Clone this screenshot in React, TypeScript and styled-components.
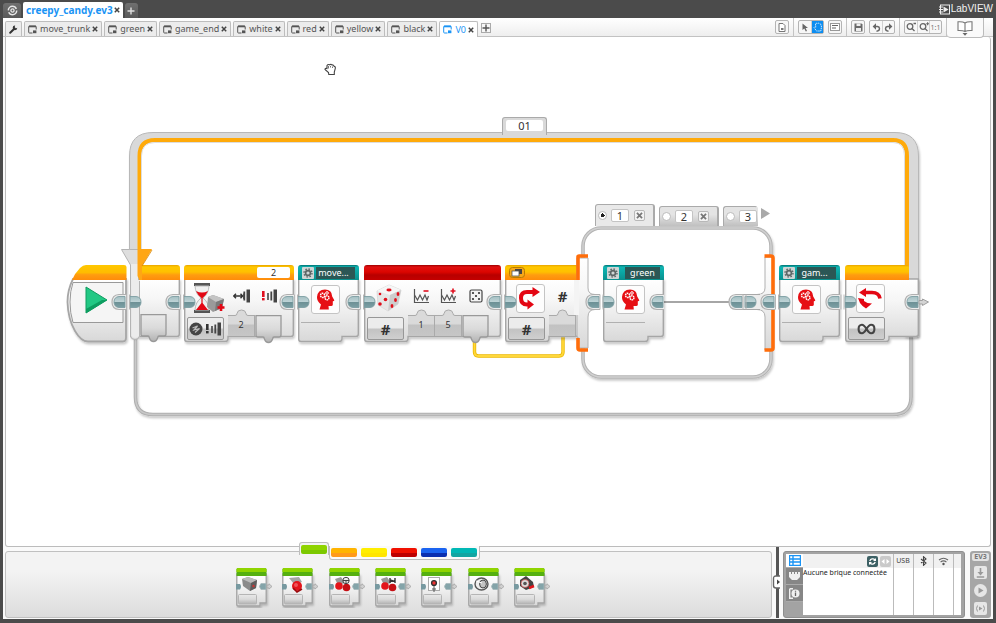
import React from "react";
import styled, { createGlobalStyle, css } from "styled-components";

const Global = createGlobalStyle`
  * { box-sizing: border-box; }
  body { margin: 0; background: #4b4b4b; }
  button, input { font: inherit; color: inherit; margin: 0; }
  svg { display: block; flex: none; }
`;

const blue = "#1a94f5";

/* ---------- shell ---------- */

const Page = styled.div`
  min-height: 100vh;
  display: flex;
  flex-direction: column;
  padding: 0 3px 4px;
  background: #4b4b4b;
  color: #555;
  font: 9px/12px "Noto Sans", "DejaVu Sans", sans-serif;
`;

const TitleBar = styled.header`
  display: flex;
  align-items: flex-end;
  height: 18px;
`;

const TitleButton = styled.button<{ $w: number }>`
  display: grid;
  place-items: center;
  width: ${(p) => p.$w}px;
  height: 15px;
  padding: 0;
  border: 0;
  border-radius: 3px 3px 0 0;
  background: linear-gradient(#707070, #595959);
`;

const ProjectTab = styled.div`
  display: flex;
  align-items: center;
  gap: 1px;
  height: 16px;
  margin: 0 2px;
  padding: 0 3px;
  border-radius: 2px 2px 0 0;
  background: #fff;
  color: ${blue};
  font-size: 10px;
  font-weight: 700;
`;

const Logo = styled.div`
  display: flex;
  align-items: center;
  gap: 1px;
  margin-left: auto;
  height: 18px;
  color: #f2f2f2;
  font: 10px/12px "Liberation Sans", Arial, sans-serif;
`;

const Frame = styled.main`
  flex: 1;
  display: flex;
  flex-direction: column;
  padding-bottom: 1px;
  background: #fafafa;
`;

const TabBar = styled.nav`
  display: flex;
  align-items: stretch;
  height: 19px;
  padding: 0 9px 0 2px;
  border-bottom: 1px solid #c2c2c2;
  background: linear-gradient(#fff, #eee);
`;

const Tab = styled.div<{ $active?: boolean }>`
  display: flex;
  align-items: center;
  gap: 2px;
  height: 15px;
  margin: 3px 2px 0 0;
  padding: 0 3px;
  border: 1px solid #bdbdbd;
  border-bottom: 0;
  border-radius: 2px 2px 0 0;
  background: #ececec;
  ${(p) =>
    p.$active &&
    css`
      height: 16px;
      background: #fff;
      color: ${blue};
      position: relative;
    `}
`;

const Plain = styled.button`
  display: flex;
  align-items: center;
  gap: 3px;
  padding: 0;
  border: 0;
  background: none;
`;

const AddTab = styled.button`
  display: grid;
  place-items: center;
  width: 10px;
  height: 10px;
  margin: 5px 0 0 1px;
  padding: 0;
  border: 1px solid #aaa;
  background: #f6f6f6;
`;

const Tools = styled.div`
  display: flex;
  margin-left: auto;
`;

const ToolGroup = styled.div`
  display: flex;
  align-items: center;
  gap: 4px;
  padding: 0 4px;
  border-right: 1px solid #c4c4c4;
`;

const ToolSet = styled.div`
  display: flex;
  height: 14px;
  border: 1px solid #b4b4b4;
  border-radius: 2px;
  background: #f7f7f7;
`;

const Tool = styled.button<{ $on?: boolean }>`
  display: grid;
  place-items: center;
  width: 12px;
  height: 12px;
  padding: 0;
  border: 0;
  background: ${(p) => (p.$on ? "#0d8df0" : "none")};
  color: ${(p) => (p.$on ? "#fff" : "#777")};
  font-size: 7px;
  line-height: 9px;
  & + & { border-left: 1px solid #d0d0d0; }
`;

const BookButton = styled.button`
  display: grid;
  place-items: center;
  width: 37px;
  height: 20px;
  padding: 0;
  border: 1px solid #bbb;
  border-width: 0 1px 1px 0;
  border-radius: 0 0 4px 4px;
  background: #fafafa;
  position: relative;
  z-index: 2;
`;

/* ---------- canvas ---------- */

const Canvas = styled.section`
  flex: 1;
  min-height: 420px;
  margin: 0 2px;
  border: 1px solid #bcbcbc;
  border-top: 0;
  border-radius: 0 3px 3px 3px;
  background: #fff;
  position: relative;
  overflow: hidden;
`;

const Layer = styled.svg`
  position: absolute;
  left: 0;
  top: 0;
  pointer-events: none;
`;

const Node = styled.div<{ $x: number; $y: number; $w?: number }>`
  position: absolute;
  left: ${(p) => p.$x}px;
  top: ${(p) => p.$y}px;
  width: ${(p) => (p.$w ? p.$w + "px" : "auto")};
`;

const headerFill = {
  orange: "linear-gradient(#e8a400, #ffc800 2px, #ffc000 7px, #ff9c10 10px, #ff8c0a)",
  red: "linear-gradient(#9c0000, #e01010 2px, #dc0500 7px, #b80000 10px, #c40000)",
  teal: "linear-gradient(#00706f, #10b5b3 2px, #0aa5a3 8px, #0b8f8d)",
};

const BlockHeader = styled.div<{ $c: keyof typeof headerFill; $end?: number }>`
  display: flex;
  align-items: center;
  justify-content: space-between;
  height: 15px;
  margin-right: ${(p) => p.$end ?? 0}px;
  padding: 0 4px;
  border-radius: 3px 3px 0 0;
  background: ${(p) => headerFill[p.$c]};
  position: relative;
`;

const BlockName = styled.span<{ $wide?: boolean }>`
  width: ${(p) => (p.$wide ? 39 : 35)}px;
  height: 12px;
  padding-right: ${(p) => (p.$wide ? 4 : 0)}px;
  background: #2b5755;
  color: #fff;
  text-align: center;
`;

const Columns = styled.div<{ $h: number }>`
  display: grid;
  grid-template-columns: 44px repeat(3, 27px);
  height: ${(p) => p.$h}px;
  position: relative;
`;

const IconCell = styled.div<{ $lead?: boolean }>`
  display: flex;
  align-items: center;
  justify-content: center;
  height: ${(p) => (p.$lead ? 36 : 32)}px;
  padding-left: ${(p) => (p.$lead ? 6 : 0)}px;
  color: #333;
  font-size: 15px;
  font-weight: 700;
`;

const IconBox = styled.div`
  display: grid;
  place-items: center;
  width: 29px;
  height: 29px;
  border: 1px solid #c4c4c4;
  border-radius: 3px;
  background: #fdfdfd;
`;

const BlockIcon = styled.div`
  padding: 5px 0 0 13px;
  position: relative;
`;

const Selector = styled.button`
  display: flex;
  align-items: center;
  justify-content: center;
  gap: 1px;
  width: 37px;
  height: 23px;
  margin: 2px 0 0 3px;
  padding: 0;
  border: 1px solid #979797;
  border-radius: 2px;
  background: linear-gradient(#ececec 45%, #c3c3c3 55%, #cfcfcf);
  color: #333;
  font-size: 15px;
  font-weight: 700;
`;

const Param = styled.button`
  height: 21px;
  padding: 0 0 2px;
  border: 0;
  border-right: 1px solid #aaa;
  background: linear-gradient(#dadada 40%, #c2c2c2 50%, #c6c6c6);
  color: #333;
  position: relative;
`;

const Bump = styled.svg`
  position: absolute;
  left: 0;
  top: -6px;
`;

const Field = styled.input<{ $w: number }>`
  width: ${(p) => p.$w}px;
  height: ${(p) => (p.$w > 20 ? 11 : 13)}px;
  padding: 0;
  border: ${(p) => (p.$w > 30 ? "0" : "1px solid #c4c4c4")};
  border-radius: 2px;
  background: #fff;
  color: #333;
  text-align: center;
  font-size: ${(p) => (p.$w === 33 ? 9 : 11)}px;
  line-height: 11px;
`;

const LoopName = styled.div`
  padding: 2px 3px 4px;
  border: 1px solid #aaa;
  border-bottom: 0;
  border-radius: 3px 3px 0 0;
  background: #d9d9d9;
  line-height: 0;
`;

const CaseTabs = styled.div`
  display: flex;
  align-items: flex-end;
  gap: 4px;
`;

const CaseTab = styled.div<{ $on?: boolean; $cut?: boolean }>`
  display: flex;
  align-items: center;
  gap: 4px;
  width: ${(p) => (p.$cut ? 35 : 60)}px;
  height: ${(p) => (p.$on ? 22 : 20)}px;
  padding-left: 2px;
  border: 1px solid #aaa;
  border-width: 1px 2px 0 1px;
  border-right-color: ${(p) => (p.$cut ? "transparent" : "#aaa")};
  border-radius: 3px 3px 0 0;
  background: ${(p) => (p.$on ? "#e9e9e9" : "linear-gradient(#e4e4e4 40%, #c0c0c0)")};
`;

const Radio = styled.input`
  appearance: none;
  flex: none;
  width: 9px;
  height: 9px;
  margin: 0;
  border: 1px solid #bbb;
  border-radius: 50%;
  background: #fff;
  &:checked { background: radial-gradient(#222 0 2px, #fff 2px); }
`;

const CloseCase = styled.button`
  display: grid;
  place-items: center;
  width: 11px;
  height: 11px;
  margin-left: 1px;
  padding: 0;
  border: 1px solid #b8b8b8;
  border-radius: 2px;
  background: #f2f2f2;
`;

/* ---------- bottom ---------- */

const Bottom = styled.div`
  display: flex;
  align-items: stretch;
  height: 67px;
  margin: 4px 2px 0;
`;

const Palette = styled.section`
  flex: 1;
  padding: 16px 0 0 9px;
  border: 1px solid #c0c0c0;
  border-radius: 3px;
  background: linear-gradient(#f3f3f3 30%, #dcdcdc);
  position: relative;
`;

const PaletteTabs = styled.div`
  display: flex;
  justify-content: center;
  position: absolute;
  left: 2px;
  right: 0;
  top: -10px;
`;

const ActiveSwatch = styled.div`
  height: 13px;
  padding: 2px 1px;
  border: 1px solid #bdbdbd;
  border-bottom: 0;
  border-radius: 3px 3px 0 0;
  background: #f3f3f3;
`;

const SwatchRow = styled.div`
  display: flex;
  gap: 4px;
  height: 14px;
  margin-top: 4px;
  padding: 2px 2px 0 1px;
  border: 1px solid #bdbdbd;
  border-width: 0 1px 1px;
  border-radius: 0 0 3px 3px;
  background: #fafafa;
`;

const Swatch = styled.button<{ $a: string; $b: string }>`
  display: block;
  width: 26px;
  height: 9px;
  padding: 0;
  border: 0;
  border-radius: 2px;
  background: linear-gradient(${(p) => p.$a} 55%, ${(p) => p.$b} 60%);
`;

const PaletteGrid = styled.div`
  display: grid;
  grid-template-columns: repeat(7, 1fr);
  justify-items: center;
  width: 324px;
  margin: 0 auto;
`;

const Divider = styled.button`
  width: 10px;
  margin: -5px 1px 0 0;
  padding: 0;
  border: 0;
  background: linear-gradient(90deg, transparent 4px, #555 4px 7px, transparent 7px);
  display: grid;
  place-items: center;
`;

const BrickPanel = styled.section`
  display: grid;
  grid-template-columns: 17px 1fr;
  width: 182px;
  padding: 2px 3px 2px 2px;
  border: 1px solid #8f8f8f;
  border-radius: 3px;
  background: #a3a3a3;
  color: #444;
`;

const SideTabs = styled.div`
  display: flex;
  flex-direction: column;
`;

const SideTab = styled.button<{ $on?: boolean }>`
  display: grid;
  place-items: center;
  height: ${(p) => (p.$on ? 14 : 17)}px;
  padding: 0;
  border: 0;
  border-bottom: 1px solid #aaa;
  background: ${(p) => (p.$on ? "#fff" : "#868686")};
`;

const BrickTable = styled.table`
  width: 100%;
  height: 61px;
  border-collapse: collapse;
  background: #fff;
  th, td { padding: 0; border-left: 1px solid #bbb; vertical-align: top; }
  th:first-child, td:first-child { border-left: 0; }
  th { height: 14px; background: #f1f1f1; font-weight: 400; font-size: 7px; vertical-align: middle; }
  th svg { margin: 0 auto; }
  td { color: #222; font-size: 7px; line-height: 10px; white-space: nowrap; }
  th:nth-child(2), th:nth-child(3), th:nth-child(4) { width: 20px; }
  th:last-child { width: 8px; }
`;

const HeadTools = styled.div`
  display: flex;
  justify-content: flex-end;
  gap: 2px;
  padding-right: 2px;
`;

const IconButton = styled.button<{ $dark?: boolean }>`
  display: grid;
  place-items: center;
  width: 11px;
  height: 11px;
  padding: 0;
  border: 0;
  border-radius: 2px;
  background: ${(p) => (p.$dark ? "#3d6165" : "#c9c9c9")};
  && svg { margin: 0; }
`;

const Ev3Panel = styled.aside`
  display: flex;
  flex-direction: column;
  align-items: center;
  gap: 5px;
  width: 21px;
  margin-left: 5px;
  padding-top: 2px;
  border-radius: 3px;
  background: #a6a6a6;
`;

const Ev3Label = styled.span`
  width: 17px;
  height: 8px;
  border-radius: 2px;
  background: #e2e2e2;
  color: #777;
  font-size: 7px;
  font-weight: 700;
  line-height: 8px;
  text-align: center;
`;

const Ev3Button = styled.button<{ $round?: boolean }>`
  display: grid;
  place-items: center;
  width: 13px;
  height: 13px;
  padding: 0;
  border: 0;
  border-radius: ${(p) => (p.$round ? "50%" : "2px")};
  background: #e6e6e6;
`;

/* ---------- icons ---------- */

const Cross = ({ s = 6, c = "#444" }: { s?: number; c?: string }) => (
  <svg width={s} height={s} viewBox="0 0 6 6"><path d="M.8 .8L5.2 5.2M5.2 .8L.8 5.2" stroke={c} strokeWidth="1.5" /></svg>
);

const Plus = ({ c }: { c: string }) => (
  <svg width="8" height="8" viewBox="0 0 8 8"><path d="M4 .5V7.5M.5 4H7.5" stroke={c} strokeWidth="1.4" /></svg>
);

const FileIcon = () => (
  <svg width="9" height="9" viewBox="0 0 9 9">
    <path d="M4.5 8H1.5Q.7 8 .7 7.2V1.8Q.7 1 1.5 1H7.3Q8.2 1 8.2 1.8V4.5" fill="none" stroke="currentColor" strokeWidth="1" />
    <path d="M1 1.5H8" stroke="currentColor" strokeWidth="1.6" />
    <rect x="5" y="5.4" width="3.4" height="2.8" fill="currentColor" />
  </svg>
);

const Gear = () => (
  <svg width="12" height="12" viewBox="0 0 12 12">
    <rect width="12" height="12" rx="1" fill="#cfd6d6" />
    <circle cx="6" cy="6" r="2.4" fill="none" stroke="#5c6666" strokeWidth="1.6" />
    <circle cx="6" cy="6" r="4" fill="none" stroke="#5c6666" strokeWidth="1.4" strokeDasharray="1.5 1.64" />
  </svg>
);

const Head = () => (
  <svg width="19" height="21" viewBox="0 0 19 21">
    <path d="M3.5 20.5L5 15.5Q.8 12.3 1 8Q1.6 1 9 .6Q15.8 .6 16.2 7.4L18.3 11.2Q18.4 12 16.8 12.2V15.8Q16.6 17 15.2 17H12.5L12.8 20.5Z" fill="#e60f14" />
    <g fill="none" stroke="#fff">
      <circle cx="6.6" cy="6.4" r="2.1" strokeWidth="1.5" strokeDasharray="1.5 .5" />
      <circle cx="11" cy="8.8" r="2" strokeWidth="1.4" strokeDasharray="1.4 .5" />
      <circle cx="11" cy="4" r="1.3" strokeWidth="1" />
    </g>
  </svg>
);

const Wave = ({ plus }: { plus?: boolean }) => (
  <svg width="17" height="16" viewBox="0 0 17 16">
    <path d="M1.500 1V14.500H16" fill="none" stroke="#555" strokeWidth="1.200" />
    <path d="M1.500 7L4.500 12L7 7L9.500 12L12 7L14 12L15.500 8" fill="none" stroke="#555" strokeWidth="1.2" />
    <path d={plus ? "M10.5 3H15.5M13 .5V5.5" : "M10.5 3H15.5"} stroke="#e01020" strokeWidth="1.6" />
  </svg>
);

const Bars = ({ bang, sq }: { bang?: boolean; sq?: boolean }) => (
  <svg width="18" height="16" viewBox="0 0 18 16">
    {bang ? (
      <g fill={sq ? "#333" : "#e01020"}><rect x="2" y="3" width="2.6" height="6" /><rect x="2" y="10" width="2.6" height="2.4" /></g>
    ) : (
      <path d="M1 8H9M3 5.8L.8 8L3 10.2M7.5 5.8L9.6 8L7.5 10.2" fill="none" stroke="#333" strokeWidth="1.4" />
    )}
    <path d={bang ? "M8 5V12" : "M11 5.5V11"} stroke="#444" strokeWidth="1.6" />
    <path d="M11.3 3.5V12.5" stroke="#444" strokeWidth="1.8" />
    <path d="M13.500 1.5H17V14.5H13.500Z" fill="#444" />
  </svg>
);

const Hourglass = () => (
  <svg width="32" height="31" viewBox="0 0 32 31">
    <rect x="1" y="0" width="16" height="3" fill="#555" /><rect x="1" y="27" width="16" height="3" fill="#555" />
    <path d="M2 3H16Q15.5 11 10 15Q15.5 19 16 27H2Q2.5 19 8 15Q2.5 11 2 3Z" fill="#f0f0f0" stroke="#bbb" />
    <path d="M3 8Q9 11 15 8Q13 12.5 9.6 15V20L15 27H3L8.4 20V15Q5 12.5 3 8Z" fill="#e30613" />
    <path d="M15 14L20 12L31 16L29 25L20 29L14 24Z" fill="#9a9a9a" />
    <path d="M15 14L20 12L31 16L23 19Z" fill="#c4c4c4" /><path d="M23 19L31 16L29 25L22 28Z" fill="#7a7a7a" />
    <path d="M28 21V28M24.500 24.5H31.500" stroke="#e30613" strokeWidth="2.600" />
  </svg>
);

const Dice = () => (
  <svg width="26" height="28" viewBox="0 0 26 28">
    <path d="M1 7L13 1L25 6L22 20L12 27L2 21Z" fill="#e6e6e6" stroke="#ddd" strokeLinejoin="round" />
    <path d="M1 7L13 1L25 6L14 11Z" fill="#f6f6f6" /><path d="M14 11L25 6L22 20L12 27Z" fill="#cdcdcd" />
    <g fill="#e0101c">
      <ellipse cx="13" cy="6" rx="2.6" ry="1.4" /><circle cx="4" cy="10" r="1.3" /><circle cx="9.5" cy="15.5" r="1.8" /><circle cx="4" cy="20" r="1.8" />
      <ellipse cx="22" cy="10" rx="1.4" ry="2" /><ellipse cx="19.5" cy="16" rx="1.4" ry="2" /><ellipse cx="16" cy="22" rx="1.4" ry="2" />
    </g>
  </svg>
);

const Five = () => (
  <svg width="14" height="14" viewBox="0 0 14 14">
    <rect x="1" y="1" width="12" height="12" rx="1.5" fill="#f4f4f4" stroke="#444" strokeWidth="1.2" />
    <g fill="#333"><circle cx="4" cy="4" r="1.1" /><circle cx="10" cy="4" r="1.1" /><circle cx="7" cy="7" r="1.1" /><circle cx="4" cy="10" r="1.1" /><circle cx="10" cy="10" r="1.1" /></g>
  </svg>
);

const SwitchArrow = () => (
  <svg width="24" height="23" viewBox="0 0 24 23">
    <path d="M16 5H9Q3 5 3 11Q3 17.5 9 17.5H11" fill="none" stroke="#e30613" strokeWidth="4" />
    <path d="M14.5 0L22 5L14.5 10ZM9.5 12.5L16 17.5L9.5 22.5Z" fill="#e30613" />
  </svg>
);

const LoopArrow = () => (
  <svg width="24" height="21" viewBox="0 0 24 21">
    <path d="M7 4.500H14Q21 4.500 22 10.5" fill="none" stroke="#e30613" strokeWidth="3.6" />
    <path d="M8 0L1 4.5L8 9ZM0 10L6 11L6 13Q9 15.5 14 15.5L8 20.5Q4 18 2 15Z" fill="#e30613" />
  </svg>
);

const Infinity8 = () => (
  <svg width="19" height="12" viewBox="0 0 19 12">
    <path d="M9.5 6C7.6 2.8 6.6 1.8 4.9 1.8C2.8 1.8 1.6 3.6 1.6 6S2.8 10.2 4.9 10.2C6.6 10.2 7.6 9.2 9.5 6C11.4 2.8 12.4 1.8 14.1 1.8C16.2 1.8 17.4 3.6 17.4 6S16.2 10.2 14.1 10.2C12.4 10.2 11.4 9.2 9.5 6Z" fill="none" stroke="#444" strokeWidth="2.1" />
  </svg>
);

/* ---------- blocks ---------- */

const Defs = () => (
  <defs>
    <linearGradient id="body" x1="0" y1="0" x2="0" y2="1"><stop offset="0" stopColor="#fff" /><stop offset=".35" stopColor="#f6f6f6" /><stop offset="1" stopColor="#d8d8d8" /></linearGradient>
    <linearGradient id="port" x1="0" y1="0" x2="0" y2="1"><stop offset="0" stopColor="#a5bfc2" /><stop offset=".48" stopColor="#bdd3d6" /><stop offset=".52" stopColor="#6d9095" /><stop offset="1" stopColor="#7ba0a5" /></linearGradient>
    <linearGradient id="plug" x1="0" y1="0" x2="0" y2="1"><stop offset="0" stopColor="#e9e9e9" /><stop offset=".5" stopColor="#dadada" /><stop offset="1" stopColor="#b2b2b2" /></linearGradient>
    <linearGradient id="head" x1="0" y1="0" x2="0" y2="1"><stop offset="0" stopColor="#ffc800" /><stop offset=".5" stopColor="#ffbc00" /><stop offset=".65" stopColor="#ff9c10" /><stop offset="1" stopColor="#ff8c0a" /></linearGradient>
    <filter id="soft" x="-10%" y="-10%" width="125%" height="130%"><feDropShadow dx="1" dy="2" stdDeviation="1" floodOpacity=".22" /></filter>
  </defs>
);

const BodyShape = ({ w, notch, y = 14 }: { w: number; notch: number; y?: number }) => (
  <Layer width={w + 6} height="84" viewBox={`0 0 ${w + 6} 84`}>
    <path
      filter="url(#soft)" fill="url(#body)" stroke="#a6a6a6" strokeWidth="1.4"
      d={notch
        ? `M.7 ${y}H${w - 0.7}V69Q${w - 0.7} 71.5 ${w - 3} 71.5H${notch + 1}V74Q${notch + 1} 76.5 ${notch - 2} 76.5H3Q.7 76.5 .7 74Z`
        : `M.7 ${y}H${w - 0.7}V69Q${w - 0.7} 71.5 ${w - 3} 71.5H.7Z`}
    />
  </Layer>
);

const ValueParam = ({ v, label }: { v: string; label: string }) => (
  <Param aria-label={label}>
    <Bump width="27" height="7" viewBox="0 0 27 7">
      <path d="M0 6.5H7Q9 6.5 9 4.5Q9.5 1 13.5 1Q17.5 1 18 4.5Q18 6.5 20 6.5H27" fill="#dadada" stroke="#aaa" />
    </Bump>
    {v}
  </Param>
);

const plugPath = "M1 .7H26V20Q26 22 24 22H19Q18 22 17.5 24Q16.500 27.500 13.500 27.500T9.500 24Q9 22 8 22H3Q1 22 1 20Z";

const OutPlug = () => (
  <svg width="27" height="29" viewBox="0 0 27 29">
    <path d={plugPath} fill="url(#plug)" stroke="#999" strokeWidth="1.3" />
  </svg>
);

const MyBlock = ({ x, name, wide }: { x: number; name: string; wide?: boolean }) => (
  <Node $x={x} $y={228} $w={61}>
    <BodyShape w={61} notch={wide ? 43 : 44} />
    <BlockHeader $c="teal"><Gear /><BlockName $wide={wide}>{name}</BlockName></BlockHeader>
    <BlockIcon>
      <IconBox><Head /></IconBox>
    </BlockIcon>
    <Layer width="50" height="62" viewBox="0 0 50 62"><path d="M3 57.500H42" stroke="#b0b0b0" /></Layer>
  </Node>
);

const leftPorts = [130, 184, 298, 364, 505, 603, 745, 779, 845];
const rightPorts = [126, 180, 294, 360, 501, 600, 664, 743, 775, 840, 919];

const Ports = () => (
  <Layer width="930" height="400" viewBox="6 37 930 400">
    {rightPorts.map((x) => (
      <g key={"r" + x}>
        <path d={`M${x} 294.500H${x - 7}Q${x - 14} 295 ${x - 14} 302T${x - 7} 309.500H${x}`} fill="#ececec" stroke="#b0b0b0" strokeWidth="1.200" />
        <path d={`M${x - 1} 296.500H${x - 7}Q${x - 12} 297 ${x - 12} 302T${x - 7} 307.500H${x - 1}Z`} fill="url(#port)" stroke="#7d9ea3" strokeWidth=".9" />
      </g>
    ))}
    {leftPorts.map((x) => (
      <path key={"l" + x} d={`M${x} 296.500H${x + 6}Q${x + 11} 297 ${x + 11} 302T${x + 6} 307.500H${x}Z`} fill="url(#port)" stroke="#7d9ea3" strokeWidth=".9" />
    ))}
    {[128, 182, 296, 362, 503, 601.5, 744.5, 777, 842.5].map((x) => (
      <path key={x} d={`M${x - 1.5} 294.500V309.500M${x + 1.5} 294.500V309.500`} stroke="#b8b8b8" />
    ))}
    <path d="M919 300.500H922.500V299L928.500 302L922.500 305.500V304H919Z" fill="#d4d4d4" stroke="#a0a0a0" />
  </Layer>
);

const Wires = () => (
  <Layer width="930" height="400" viewBox="6 37 930 400">
    <Defs />
    {/* loop frame */}
    <path d="M135.500 338V397Q135.500 414.500 153 414.500H893Q911 414.500 911 397V336" fill="none" stroke="#b0b0b0" strokeWidth="3.600" filter="url(#soft)" />
    <path d="M135.500 338V397Q135.500 414.500 153 414.500H893Q911 414.500 911 397V336" fill="none" stroke="#c8c8c8" strokeWidth="1.500" />
    <path d="M129.500 250V156Q129.500 132.500 153 132.500H895Q918.500 132.500 918.500 156V336H905V156Q905 142 893 142H155Q141 142 141 156V250Z" fill="#d9d9d9" stroke="#b8b8b8" filter="url(#soft)" />
    <path d="M141 265V156Q141 142 155 142H893Q905 142 905 156V270H845V260H141Z" fill="#fff" />
    <path d="M139.500 268V156Q139.500 140 155 140H893Q907 140 907 156V275" fill="none" stroke="#ffaa0a" strokeWidth="4" />
    <path d="M141.500 262V156Q141.500 142.500 155 142.500H893Q904.500 142.500 904.500 156V265" fill="none" stroke="#ddd" />
    {/* data wire and sequence wire */}
    <path d="M474.500 340V352Q474.500 356 478.500 356H559Q563 356 563 352V334" fill="none" stroke="#ecb800" strokeWidth="3.400" />
    <path d="M474.500 340V352Q474.500 356 478.500 356H559Q563 356 563 352V334" fill="none" stroke="#ffd83a" strokeWidth="1.800" />
    {/* switch frame */}
    <rect x="583" y="228" width="188" height="149" rx="18" fill="#fff" stroke="#b4b4b4" strokeWidth="3.600" filter="url(#soft)" />
    <rect x="583" y="228" width="188" height="149" rx="18" fill="none" stroke="#d0d0d0" strokeWidth="1.500" />
    <path d="M664 302H734" stroke="#a6a6a6" strokeWidth="2" />
  </Layer>
);

const SwitchSides = () => (
  <Layer width="930" height="400" viewBox="6 37 930 400">
    <path d="M577 258H588V288Q588 294.500 595 294.500V309.500Q588 309.500 588 317V348H578V337H577Z" fill="url(#body)" stroke="#b0b0b0" />
    <rect x="574" y="280" width="5" height="35" fill="#f4f4f4" />
    <path d="M578 280V257Q578 256 579 256H588" fill="none" stroke="#ff6d0a" strokeWidth="3.600" />
    <path d="M578 338V348Q578 350 580 350H588" fill="none" stroke="#ff6d0a" strokeWidth="3.600" />
    <path d="M773 257H765V288Q765 294.500 757 294.500V309.500Q765 309.500 765 317V350H773Z" fill="url(#body)" stroke="#b0b0b0" />
    <path d="M764.500 256H771Q773 256 773 258V348Q773 350 771 350H764.500" fill="none" stroke="#ff6d0a" strokeWidth="3.600" />
    <path d="M743 294.500H765V309.500H743Z" fill="#ececec" />
    <path d="M743 294.500H760M743 309.500H760" stroke="#a8a8a8" />
  </Layer>
);

const StartBlock = () => (
  <Node $x={60} $y={228} $w={66}>
    <svg width="66" height="82" viewBox="0 0 66 82">
      <path d="M7 14Q1.500 25 1.500 37Q2 54 9 66Q15 76.500 22 76.500H57Q60 76.500 60 73V14Z" fill="url(#body)" stroke="#a6a6a6" strokeWidth="1.800" filter="url(#soft)" />
      <path d="M6 15Q9 8 14 3Q17 0 20 0H58Q60.500 0 60.500 2V15Z" fill="url(#head)" />
      <path d="M7 17.500H57V57.500H7Q4 48 4 37Q4 26 7 17.500Z" fill="#f5f5f5" stroke="#999" />
      <path d="M20 22V48L41 35Z" fill="#22c884" stroke="#0e9b5f" />
      <path d="M20 48L41 35L36 35L20 44Z" fill="#0d9d60" />
    </svg>
  </Node>
);

const LoopStart = () => (
  <Node $x={124} $y={228} $w={50}>
    <BodyShape w={50} notch={0} />
    <BlockHeader $c="orange" />
  </Node>
);

const LoopSpine = () => (
  <Layer width="930" height="400" viewBox="6 37 930 400">
    <path d="M129.500 249.500H121.500L130.500 265V336Q131 339.500 135 339.500T139.500 336V281H138.500V249.500Z" fill="#dedede" stroke="#b4b4b4" />
    <path d="M131 264H138V280H139V336Q135 340 131.500 336Z" fill="#ececec" />
    <path d="M137.500 249H152L142 266V280H139.500L137.500 276Z" fill="#ffa614" />
    <path d="M142 266L152 250" stroke="#d98500" strokeWidth=".8" />
    <g transform="translate(140 314)">
      <path d={plugPath} fill="url(#plug)" stroke="#999" strokeWidth="1.300" />
    </g>
  </Layer>
);

const Cursor = () => (
  <Node $x={318} $y={26}>
    <svg width="13" height="13" viewBox="0 0 13 13">
      <path d="M3 2.500Q4 1 5.500 1.800Q7 .8 8 2Q9.600 1.600 10 3.200Q11.600 3.400 11.300 5.500L10.300 9V11.500H4.800L4.500 9.500L1 6.500Q1 5 3 5.500Z" fill="#fff" stroke="#444" strokeWidth="1.100" />
      <path d="M4.500 3V5.500M6.500 3V4.500M8.500 3.500V5" stroke="#555" strokeWidth=".8" />
    </svg>
  </Node>
);

/* ---------- palette ---------- */

const art: Record<string, React.ReactNode> = {
  "Moteur moyen": <g><path d="M6 11L12 9L21 12L20 20L14 23L7 18Z" fill="#8b8b8b" /><path d="M6 11L12 9L21 12L15 15Z" fill="#bcbcbc" /><path d="M15 15L21 12L20 20L14 23Z" fill="#5d5d5d" /><circle cx="17.500" cy="18" r="1.200" fill="#c33" /></g>,
  "Gros moteur": <g><path d="M7 10L17 9L20 14L12 16Z" fill="#a5a5a5" /><circle cx="15" cy="18" r="5" fill="#e3151b" /><path d="M11 20L15 24L20 21" fill="none" stroke="#9a0a0e" strokeWidth="1.500" /><circle cx="14" cy="17" r="2" fill="#f0555a" /></g>,
  "Direction": <g><path d="M6 11L12 9L16 15L9 17Z" fill="#999" /><circle cx="10" cy="18" r="3.800" fill="#e3151b" /><circle cx="17.500" cy="19.500" r="3.800" fill="#c60f14" /><circle cx="17" cy="12.500" r="3.200" fill="#eee" stroke="#444" /><path d="M14 12.500H20M17 12.500V15.500" stroke="#444" /></g>,
  "Char": <g><path d="M6 11L12 9L16 15L9 17Z" fill="#999" /><circle cx="10" cy="18" r="3.800" fill="#e3151b" /><circle cx="17.500" cy="19.500" r="3.800" fill="#c60f14" /><path d="M15 10V15M20 10V15M15 12L20 13.500" stroke="#333" strokeWidth="1.400" /></g>,
  "Affichage": <g><rect x="7.500" y="9.500" width="11" height="13" fill="#fff" stroke="#aaa" /><circle cx="13" cy="15" r="2.400" fill="#e33" stroke="#333" strokeWidth="1.400" /><path d="M13 18V24M11 21H15" stroke="#555" /></g>,
  "Son": <g><ellipse cx="13.500" cy="16" rx="6.500" ry="6" fill="#eee" stroke="#555" strokeWidth="1.400" /><ellipse cx="15" cy="16" rx="3.400" ry="4" fill="#c4c4c4" stroke="#444" /><path d="M8 13L14 15" stroke="#fff" /></g>,
  "Témoin": <g><path d="M6 12L12 8L19 14L20 19L12 22L6 18Z" fill="#444" /><circle cx="11" cy="15.500" r="4" fill="#ddd" stroke="#c33" strokeWidth=".6" /><circle cx="11" cy="15.500" r="1.800" fill="#555" /><path d="M15 20L20 18" stroke="#e3151b" strokeWidth="2.500" /></g>,
};

const PaletteBlock = ({ name }: { name: string }) => (
  <Plain aria-label={name}>
    <svg width="36" height="40" viewBox="0 0 36 40">
      <path d="M.8 6H30.200V35H24V38H2Q.8 38 .8 36.500Z" fill="url(#body)" stroke="#a2a2a2" strokeWidth="1.300" filter="url(#soft)" />
      <path d="M2 0H29Q30.500 0 30.500 1.500V8H.5V1.500Q.5 0 2 0Z" fill="#55b010" />
      <path d="M2 0H29Q30.500 0 30.500 1.500V4H.5V1.500Q.5 0 2 0Z" fill="#8fd400" />
      {art[name]}
      <rect x="2.500" y="26.500" width="18" height="9.500" rx="1" fill="url(#plug)" stroke="#b5b5b5" />
      <path d="M25 15.500H30V21.500H25Q22 18.500 25 15.500Z" fill="#84a4a9" stroke="#a5b8ba" strokeWidth=".8" />
      <path d="M0 16H4Q6 18.500 4 21.500H0Z" fill="#7799a0" />
      <path d="M31 17H33V15.800L36 18.500L33 21V20H31Z" fill="#d0d0d0" stroke="#a5a5a5" strokeWidth=".8" />
    </svg>
  </Plain>
);

const swatches = [
  ["Flux", "#ffb400", "#ff9a1a"],
  ["Capteurs", "#ffee00", "#ffe500"],
  ["Opérations", "#f01000", "#bd0000"],
  ["Avancé", "#1a63f0", "#0a2fb0"],
  ["Mes blocs", "#00b8b5", "#12a5a2"],
];

const tabs = ["move_trunk", "green", "game_end", "white", "red", "yellow", "black", "V0"];

export default function App() {
  return (
    <Page>
      <Global />
      <TitleBar>
        <TitleButton $w={18} aria-label="Accueil">
          <svg width="11" height="11" viewBox="0 0 11 11"><circle cx="5.500" cy="5.500" r="4.200" fill="none" stroke="#e8e8e8" strokeWidth="1.500" strokeDasharray="11 2" /><circle cx="5.500" cy="5.500" r="1.600" fill="none" stroke="#e8e8e8" strokeWidth="1.300" /></svg>
        </TitleButton>
        <ProjectTab>creepy_candy.ev3<Plain aria-label="Fermer le projet"><Cross /></Plain></ProjectTab>
        <TitleButton $w={13} aria-label="Nouveau projet"><Plus c="#e0e0e0" /></TitleButton>
        <Logo>
          <svg width="11" height="11" viewBox="0 0 11 11"><rect x="1.500" y="1" width="9" height="9" fill="none" stroke="#eee" /><path d="M0 3H4M0 5.500H4M0 8H4" stroke="#eee" /><path d="M4.500 2.500L9.500 5.500L4.500 8.500Z" fill="#eee" /></svg>
          LabVIEW
        </Logo>
      </TitleBar>
      <Frame>
        <TabBar>
          <Tab>
            <Plain aria-label="Propriétés du projet">
              <svg width="9" height="9" viewBox="0 0 9 9"><path d="M1.200 7.800L5.500 3.500" stroke="#333" strokeWidth="2" strokeLinecap="round" /><path d="M8.300 2.800A2.300 2.300 0 1 1 6.200 .6L5.600 2.200L6.800 3.400Z" fill="#333" /></svg>
            </Plain>
          </Tab>
          {tabs.map((t) => (
            <Tab key={t} $active={t === "V0"}>
              <Plain><FileIcon />{t}</Plain>
              <Plain aria-label={"Fermer " + t}><Cross /></Plain>
            </Tab>
          ))}
          <AddTab aria-label="Nouveau programme"><Plus c="#555" /></AddTab>
          <Tools>
            <ToolGroup>
              <ToolSet><Tool aria-label="Contenu"><svg width="8" height="9" viewBox="0 0 8 9"><path d="M1 .5H5L7 2.500V8.500H1Z" fill="#fff" stroke="#777" /><rect x="3" y="5" width="2.500" height="2" fill="#777" /></svg></Tool></ToolSet>
            </ToolGroup>
            <ToolGroup>
              <ToolSet>
                <Tool aria-label="Sélection"><svg width="8" height="9" viewBox="0 0 8 9"><path d="M1.500 .5V7L3.300 5.500L4.800 8.500L6 7.900L4.600 5H7Z" fill="#666" /></svg></Tool>
                <Tool $on aria-label="Panoramique"><svg width="10" height="10" viewBox="0 0 10 10"><path d="M2.500 2Q3.500 .8 4.500 1.500Q5.800 .8 6.500 1.800Q8 1.800 8 3L8.500 5L7.800 9H3.500L1 5.500Q1.500 4.500 2.800 5.200Z" fill="none" stroke="#d5ecff" strokeDasharray="1.500 .7" /></svg></Tool>
              </ToolSet>
              <ToolSet><Tool aria-label="Commentaire"><svg width="10" height="8" viewBox="0 0 10 8"><rect x=".5" y=".5" width="9" height="7" fill="#fff" stroke="#999" /><path d="M2 2.500H8M2 5H6" stroke="#666" strokeWidth="1.200" /></svg></Tool></ToolSet>
            </ToolGroup>
            <ToolGroup>
              <ToolSet><Tool aria-label="Enregistrer"><svg width="9" height="9" viewBox="0 0 9 9"><path d="M.5 .5H7.500L8.500 1.500V8.500H.5Z" fill="#6b6b6b" /><rect x="2.500" y=".5" width="4" height="2.500" fill="#eee" /><rect x="2" y="5" width="5" height="3" fill="#eee" /></svg></Tool></ToolSet>
              <ToolSet>
                <Tool aria-label="Annuler"><svg width="9" height="9" viewBox="0 0 9 9"><path d="M2 3.500H5.500Q7.500 3.700 7.500 5.500Q7.500 8 4.500 8.200" fill="none" stroke="#666" strokeWidth="1.400" /><path d="M4 .3L.6 3.500L4 6.700Z" fill="#666" /></svg></Tool>
                <Tool aria-label="Rétablir"><svg width="9" height="9" viewBox="0 0 9 9"><path d="M7 3.500H3.500Q1.500 3.700 1.500 5.500Q1.500 8 4.500 8.200" fill="none" stroke="#666" strokeWidth="1.400" /><path d="M5 .3L8.400 3.500L5 6.700Z" fill="#666" /></svg></Tool>
              </ToolSet>
            </ToolGroup>
            <ToolGroup>
              <ToolSet>
                <Tool aria-label="Zoom arrière"><svg width="10" height="10" viewBox="0 0 10 10"><circle cx="4" cy="4.500" r="2.800" fill="none" stroke="#666" strokeWidth="1.300" /><path d="M6 6.500L8.500 9M7.500 1.500H10" stroke="#666" strokeWidth="1.300" /></svg></Tool>
                <Tool aria-label="Zoom avant"><svg width="10" height="10" viewBox="0 0 10 10"><circle cx="4" cy="4.500" r="2.800" fill="none" stroke="#666" strokeWidth="1.300" /><path d="M6 6.500L8.500 9M7.200 1.700H10M8.600 .2V3.200" stroke="#666" strokeWidth="1.100" /></svg></Tool>
                <Tool>1:1</Tool>
              </ToolSet>
            </ToolGroup>
            <BookButton aria-label="Éditeur de contenu">
              <svg width="16" height="16" viewBox="0 0 16 16"><path d="M8 3Q6 1.500 1 1.800V10.500Q6 10.300 8 11.500Q10 10.300 15 10.500V1.800Q10 1.500 8 3ZM8 3V11" fill="#fff" stroke="#777" strokeWidth="1.100" /><path d="M5.500 13H10.500L8 15.800Z" fill="#666" /></svg>
            </BookButton>
          </Tools>
        </TabBar>

        <Canvas aria-label="Programme V0">
          <Wires />
          <Cursor />
          <Node $x={496} $y={80} $w={45}>
            <LoopName><Field $w={37} aria-label="Nom de la boucle" defaultValue="01" /></LoopName>
          </Node>
          <Node $x={589} $y={167}>
            <CaseTabs>
              <CaseTab $on>
                <Radio type="radio" name="case" aria-label="Cas 1 par défaut" defaultChecked />
                <Field $w={18} aria-label="Cas 1" defaultValue="1" />
                <CloseCase aria-label="Supprimer le cas 1"><Cross s={7} c="#777" /></CloseCase>
              </CaseTab>
              <CaseTab>
                <Radio type="radio" name="case" aria-label="Cas 2 par défaut" />
                <Field $w={18} aria-label="Cas 2" defaultValue="2" />
                <CloseCase aria-label="Supprimer le cas 2"><Cross s={7} c="#777" /></CloseCase>
              </CaseTab>
              <CaseTab $cut>
                <Radio type="radio" name="case" aria-label="Cas 3 par défaut" />
                <Field $w={18} aria-label="Cas 3" defaultValue="3" />
              </CaseTab>
            </CaseTabs>
          </Node>
          <Node $x={754} $y={170}>
            <Plain aria-label="Cas suivants"><svg width="11" height="13" viewBox="0 0 11 13"><path d="M1 1L10 6.500L1 12Z" fill="#a9a9a9" /></svg></Plain>
          </Node>

          <StartBlock />
          <LoopStart />
          <LoopSpine />

          <Node $x={178} $y={228} $w={110}>
            <BodyShape w={110} notch={43} />
            <BlockHeader $c="orange"><span /><Field $w={33} aria-label="Port" defaultValue="2" /></BlockHeader>
            <Columns $h={35}>
              <IconCell $lead><Hourglass /></IconCell>
              <IconCell><Bars /></IconCell>
              <IconCell><Bars bang /></IconCell>
            </Columns>
            <Columns $h={27}>
              <Selector aria-label="Mode du bloc attendre">
                <svg width="14" height="14" viewBox="0 0 14 14"><circle cx="7" cy="7" r="6.500" fill="#444" /><path d="M3.500 6L8.500 4L5 8L10.500 6.500L6 10.500" fill="none" stroke="#bbb" strokeWidth="1.200" /></svg>
                <Bars bang sq />
              </Selector>
              <ValueParam v="2" label="État" />
              <OutPlug />
            </Columns>
          </Node>

          <MyBlock x={292} name="move..." wide />

          <Node $x={358} $y={228} $w={137}>
            <BodyShape w={137} notch={43} />
            <BlockHeader $c="red" />
            <Columns $h={35}>
              <IconCell $lead><Dice /></IconCell>
              <IconCell><Wave /></IconCell>
              <IconCell><Wave plus /></IconCell>
              <IconCell><Five /></IconCell>
            </Columns>
            <Columns $h={27}>
              <Selector>#</Selector>
              <ValueParam v="1" label="Limite inférieure" />
              <ValueParam v="5" label="Limite supérieure" />
              <OutPlug />
            </Columns>
          </Node>

          <Node $x={499} $y={228} $w={74}>
            <BodyShape w={74} notch={43} />
            <BlockHeader $c="orange">
              <svg width="16" height="11" viewBox="0 0 16 11"><rect x=".5" y=".5" width="15" height="10" rx="3" fill="#f7a81a" stroke="#b87c00" /><rect x="6" y="2" width="7" height="5" fill="#444" /><rect x="3" y="4" width="7" height="5" fill="#fff" stroke="#555" strokeWidth=".8" /></svg>
            </BlockHeader>
            <Columns $h={35}>
              <IconCell $lead><IconBox><SwitchArrow /></IconBox></IconCell>
              <IconCell>#</IconCell>
            </Columns>
            <Columns $h={27}>
              <Selector>#</Selector>
              <ValueParam v="" label="Valeur de comparaison" />
            </Columns>
          </Node>
          <SwitchSides />

          <MyBlock x={597} name="green" />
          <MyBlock x={773} name="gam..." wide />

          <Node $x={839} $y={228} $w={74}>
            <BodyShape w={74} notch={43} />
            <BlockHeader $c="orange" $end={10} />
            <Columns $h={35}>
              <IconCell $lead><IconBox><LoopArrow /></IconBox></IconCell>
            </Columns>
            <Columns $h={27}>
              <Selector aria-label="Illimité"><Infinity8 /></Selector>
            </Columns>
          </Node>
          <Ports />
        </Canvas>

        <Bottom>
          <Palette>
            <PaletteTabs>
              <ActiveSwatch><Swatch $a="#8fd400" $b="#7cc800" aria-label="Action" /></ActiveSwatch>
              <SwatchRow>
                {swatches.map(([n, a, b]) => <Swatch key={n} $a={a} $b={b} aria-label={n} />)}
              </SwatchRow>
            </PaletteTabs>
            <PaletteGrid>
              {Object.keys(art).map((n) => <PaletteBlock key={n} name={n} />)}
            </PaletteGrid>
          </Palette>
          <Divider aria-label="Réduire le panneau">
            <svg width="10" height="14" viewBox="0 0 10 14"><path d="M8 1H4Q1.500 1 1.500 3.500V10.500Q1.500 13 4 13H8" fill="#fff" stroke="#666" strokeWidth="1.400" /><path d="M5 4.500L8 7L5 9.500Z" fill="#444" /></svg>
          </Divider>
          <BrickPanel>
            <SideTabs>
              <SideTab $on aria-label="Briques disponibles"><svg width="12" height="11" viewBox="0 0 12 11"><path d="M.5 .5H11.500V10.500H.5ZM4 .5V10.500M.5 4H11.500M.5 7H11.500" fill="none" stroke={blue} strokeWidth="1.400" /></svg></SideTab>
              <SideTab aria-label="Vue des ports"><svg width="11" height="10" viewBox="0 0 11 10"><path d="M0 1H2V3H3V1H5V3H6V1H8V3H9V1H11V6L8 9H3L0 6Z" fill="#f0f0f0" /></svg></SideTab>
              <SideTab aria-label="Informations"><svg width="11" height="11" viewBox="0 0 11 11"><path d="M.7 .7H4M.7 .7V10.300H4" stroke="#f0f0f0" strokeWidth="1.400" fill="none" /><circle cx="6.500" cy="5.500" r="4" fill="#f0f0f0" /><path d="M6.500 4.500V8M6.500 2.800V3.800" stroke="#666" strokeWidth="1.300" /></svg></SideTab>
            </SideTabs>
            <BrickTable>
              <thead>
                <tr>
                  <th>
                    <HeadTools>
                      <IconButton $dark aria-label="Actualiser"><svg width="9" height="9" viewBox="0 0 9 9"><path d="M7 3A3 3 0 0 0 1.800 4M2 6A3 3 0 0 0 7.200 5" fill="none" stroke="#fff" strokeWidth="1.300" /><path d="M8 1V4H5ZM1 8V5H4Z" fill="#fff" /></svg></IconButton>
                      <IconButton aria-label="Déconnecter"><svg width="9" height="7" viewBox="0 0 9 7"><path d="M3.500 1L.5 3.500L3.500 6ZM5.500 1L8.500 3.500L5.500 6Z" fill="#fff" /></svg></IconButton>
                    </HeadTools>
                  </th>
                  <th>USB</th>
                  <th aria-label="Bluetooth"><svg width="7" height="10" viewBox="0 0 7 10"><path d="M1 3L6 7L3.500 9.300V.7L6 3L1 7" fill="none" stroke="#444" strokeWidth="1.100" /></svg></th>
                  <th aria-label="Wi-Fi"><svg width="11" height="9" viewBox="0 0 11 9"><path d="M1 3Q5.500 -.6 10 3M2.600 5Q5.500 2.800 8.400 5" fill="none" stroke="#666" strokeWidth="1.100" /><circle cx="5.500" cy="7" r="1.200" fill="#555" /></svg></th>
                  <th aria-label="Défilement" />
                </tr>
              </thead>
              <tbody>
                <tr><td>Aucune brique connectée</td><td /><td /><td /><td /></tr>
              </tbody>
            </BrickTable>
          </BrickPanel>
          <Ev3Panel>
            <Ev3Label>EV3</Ev3Label>
            <Ev3Button aria-label="Télécharger"><svg width="9" height="10" viewBox="0 0 9 10"><path d="M4.500 0V5M.8 9H8.200" stroke="#999" strokeWidth="1.600" /><path d="M1.500 4H7.500L4.500 7.500Z" fill="#999" /></svg></Ev3Button>
            <Ev3Button $round aria-label="Exécuter"><svg width="7" height="7" viewBox="0 0 7 7"><path d="M1.500 .5L6.500 3.500L1.500 6.500Z" fill="#999" /></svg></Ev3Button>
            <Ev3Button aria-label="Exécuter la sélection"><svg width="11" height="9" viewBox="0 0 11 9"><path d="M4 2.500L7.500 4.500L4 6.500Z" fill="#999" /><path d="M2.500 1.500Q.5 4.500 2.500 7.500M8.500 1.500Q10.500 4.500 8.500 7.500" fill="none" stroke="#999" /></svg></Ev3Button>
          </Ev3Panel>
        </Bottom>
      </Frame>
    </Page>
  );
}
